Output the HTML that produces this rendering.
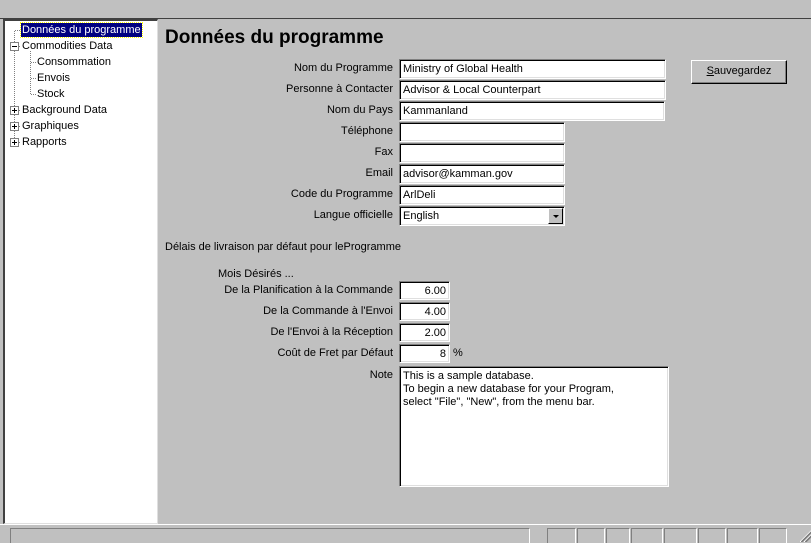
<!DOCTYPE html>
<html><head><meta charset="utf-8"><style>
*{margin:0;padding:0;box-sizing:border-box}
body{width:811px;height:542px;background:#c0c0c0;font-family:"Liberation Sans",sans-serif;font-size:11px;color:#000;position:relative;overflow:hidden}
.a{position:absolute;white-space:nowrap}
.in{position:absolute;background:#fff;border-top:1px solid #808080;border-left:1px solid #808080;border-right:1px solid #fff;border-bottom:1px solid #fff;box-shadow:inset 1px 1px 0 #000,inset -1px -1px 0 #dfdfdf;padding:3px 3px 1px;line-height:13px;white-space:nowrap}
.lbl{position:absolute;right:418px;white-space:nowrap;line-height:13px}
.num{text-align:right}
.tree{position:absolute;left:3px;top:19px;width:155px;height:505px;background:#fff;border-top:2px solid #404040;border-left:2px solid #404040;border-right:1px solid #dfdfdf;border-bottom:1px solid #dfdfdf}
.sp{position:absolute;top:528px;height:15px;border-top:1px solid #808080;border-left:1px solid #808080;border-right:1px solid #fff}
</style></head><body>
<div class="a" style="left:0;top:18px;width:811px;height:1px;background:#404040"></div>
<div class="tree">
<svg width="155" height="140" style="position:absolute;left:0;top:0" shape-rendering="crispEdges">
<g stroke="#808080" stroke-dasharray="1,1" fill="none">
<line x1="9.5" y1="10" x2="9.5" y2="120"/>
<line x1="10" y1="9.5" x2="16" y2="9.5"/>
<line x1="14" y1="25.5" x2="16" y2="25.5"/>
<line x1="25.5" y1="30" x2="25.5" y2="73"/>
<line x1="26" y1="41.5" x2="31" y2="41.5"/>
<line x1="26" y1="57.5" x2="31" y2="57.5"/>
<line x1="26" y1="73.5" x2="31" y2="73.5"/>
<line x1="14" y1="89.5" x2="16" y2="89.5"/>
<line x1="14" y1="105.5" x2="16" y2="105.5"/>
<line x1="14" y1="121.5" x2="16" y2="121.5"/>
</g>
<g stroke="#808080" fill="#fff"><rect x="5.5" y="21.5" width="8" height="8"/><rect x="5.5" y="85.5" width="8" height="8"/><rect x="5.5" y="101.5" width="8" height="8"/><rect x="5.5" y="117.5" width="8" height="8"/></g>
<g stroke="#000"><line x1="7" y1="25.5" x2="12" y2="25.5"/><line x1="7" y1="89.5" x2="12" y2="89.5"/><line x1="9.5" y1="87" x2="9.5" y2="92"/><line x1="7" y1="105.5" x2="12" y2="105.5"/><line x1="9.5" y1="103" x2="9.5" y2="108"/><line x1="7" y1="121.5" x2="12" y2="121.5"/><line x1="9.5" y1="119" x2="9.5" y2="124"/></g>
</svg>
<div class="a" style="left:16px;top:2px;background:#000080;color:#fff;padding:0 1px;line-height:14px;outline:1px dotted #ff0">Données du programme</div>
<div class="a" style="left:17px;top:18px;line-height:14px">Commodities Data</div>
<div class="a" style="left:32px;top:34px;line-height:14px">Consommation</div>
<div class="a" style="left:32px;top:50px;line-height:14px">Envois</div>
<div class="a" style="left:32px;top:66px;line-height:14px">Stock</div>
<div class="a" style="left:17px;top:82px;line-height:14px">Background Data</div>
<div class="a" style="left:17px;top:98px;line-height:14px">Graphiques</div>
<div class="a" style="left:17px;top:114px;line-height:14px">Rapports</div>
</div>
<div class="a" style="left:165px;top:27px;font-size:19px;font-weight:bold;line-height:22px">Données du programme</div>

<div class="lbl" style="top:62px">Nom du Programme</div><div class="in" style="left:399px;top:59px;width:267px;height:20px">Ministry of Global Health</div>
<div class="lbl" style="top:83px">Personne à Contacter</div><div class="in" style="left:399px;top:80px;width:267px;height:20px">Advisor &amp; Local Counterpart</div>
<div class="lbl" style="top:104px">Nom du Pays</div><div class="in" style="left:399px;top:101px;width:266px;height:20px">Kammanland</div>
<div class="lbl" style="top:125px">Téléphone</div><div class="in" style="left:399px;top:122px;width:166px;height:20px"></div>
<div class="lbl" style="top:146px">Fax</div><div class="in" style="left:399px;top:143px;width:166px;height:20px"></div>
<div class="lbl" style="top:167px">Email</div><div class="in" style="left:399px;top:164px;width:166px;height:20px">advisor@kamman.gov</div>
<div class="lbl" style="top:188px">Code du Programme</div><div class="in" style="left:399px;top:185px;width:166px;height:20px">ArlDeli</div>
<div class="lbl" style="top:209px">Langue officielle</div><div class="in" style="left:399px;top:206px;width:166px;height:20px">English
<div style="position:absolute;right:1px;top:1px;width:15px;height:16px;background:#c0c0c0;border-top:1px solid #fff;border-left:1px solid #fff;border-right:1px solid #000;border-bottom:1px solid #000"><div style="position:absolute;left:4px;top:6px;border-left:3px solid transparent;border-right:3px solid transparent;border-top:3px solid #000"></div></div></div>

<div style="position:absolute;left:691px;top:60px;width:96px;height:24px;background:#c0c0c0;border-top:1px solid #fff;border-left:1px solid #fff;border-right:1px solid #000;border-bottom:1px solid #000;box-shadow:inset -1px -1px 0 #808080;text-align:center;line-height:21px"><u>S</u>auvegardez</div>

<div class="a" style="left:165px;top:241px;line-height:13px">Délais de livraison par défaut pour leProgramme</div>
<div class="a" style="left:218px;top:268px;line-height:13px">Mois Désirés ...</div>
<div class="lbl" style="top:284px">De la Planification à la Commande</div><div class="in num" style="left:399px;top:281px;width:51px;height:19px">6.00</div>
<div class="lbl" style="top:305px">De la Commande à l'Envoi</div><div class="in num" style="left:399px;top:302px;width:51px;height:19px">4.00</div>
<div class="lbl" style="top:326px">De l'Envoi à la Réception</div><div class="in num" style="left:399px;top:323px;width:51px;height:19px">2.00</div>
<div class="lbl" style="top:347px">Coût de Fret par Défaut</div><div class="in num" style="left:399px;top:344px;width:51px;height:19px">8</div>
<div class="a" style="left:453px;top:347px;line-height:13px">%</div>
<div class="lbl" style="top:369px">Note</div>
<div class="in" style="left:399px;top:366px;width:270px;height:121px;white-space:normal">This is a sample database.<br>To begin a new database for your Program,<br>select "File", "New", from the menu bar.</div>

<div class="a" style="left:0;top:524px;width:811px;height:1px;background:#fff"></div>
<div class="sp" style="left:10px;width:520px"></div>
<div class="sp" style="left:547px;width:29px"></div>
<div class="sp" style="left:577px;width:28px"></div>
<div class="sp" style="left:606px;width:24px"></div>
<div class="sp" style="left:631px;width:32px"></div>
<div class="sp" style="left:664px;width:33px"></div>
<div class="sp" style="left:698px;width:28px"></div>
<div class="sp" style="left:727px;width:31px"></div>
<div class="sp" style="left:759px;width:28px"></div>
<svg width="12" height="12" style="position:absolute;left:799px;top:530px" shape-rendering="crispEdges">
<g stroke-width="1"><line x1="12" y1="1" x2="1" y2="12" stroke="#fff"/><line x1="12" y1="2" x2="2" y2="12" stroke="#808080"/><line x1="12" y1="3" x2="3" y2="12" stroke="#808080"/>
<line x1="12" y1="5" x2="5" y2="12" stroke="#fff"/><line x1="12" y1="6" x2="6" y2="12" stroke="#808080"/><line x1="12" y1="7" x2="7" y2="12" stroke="#808080"/></g></svg>
</body></html>
